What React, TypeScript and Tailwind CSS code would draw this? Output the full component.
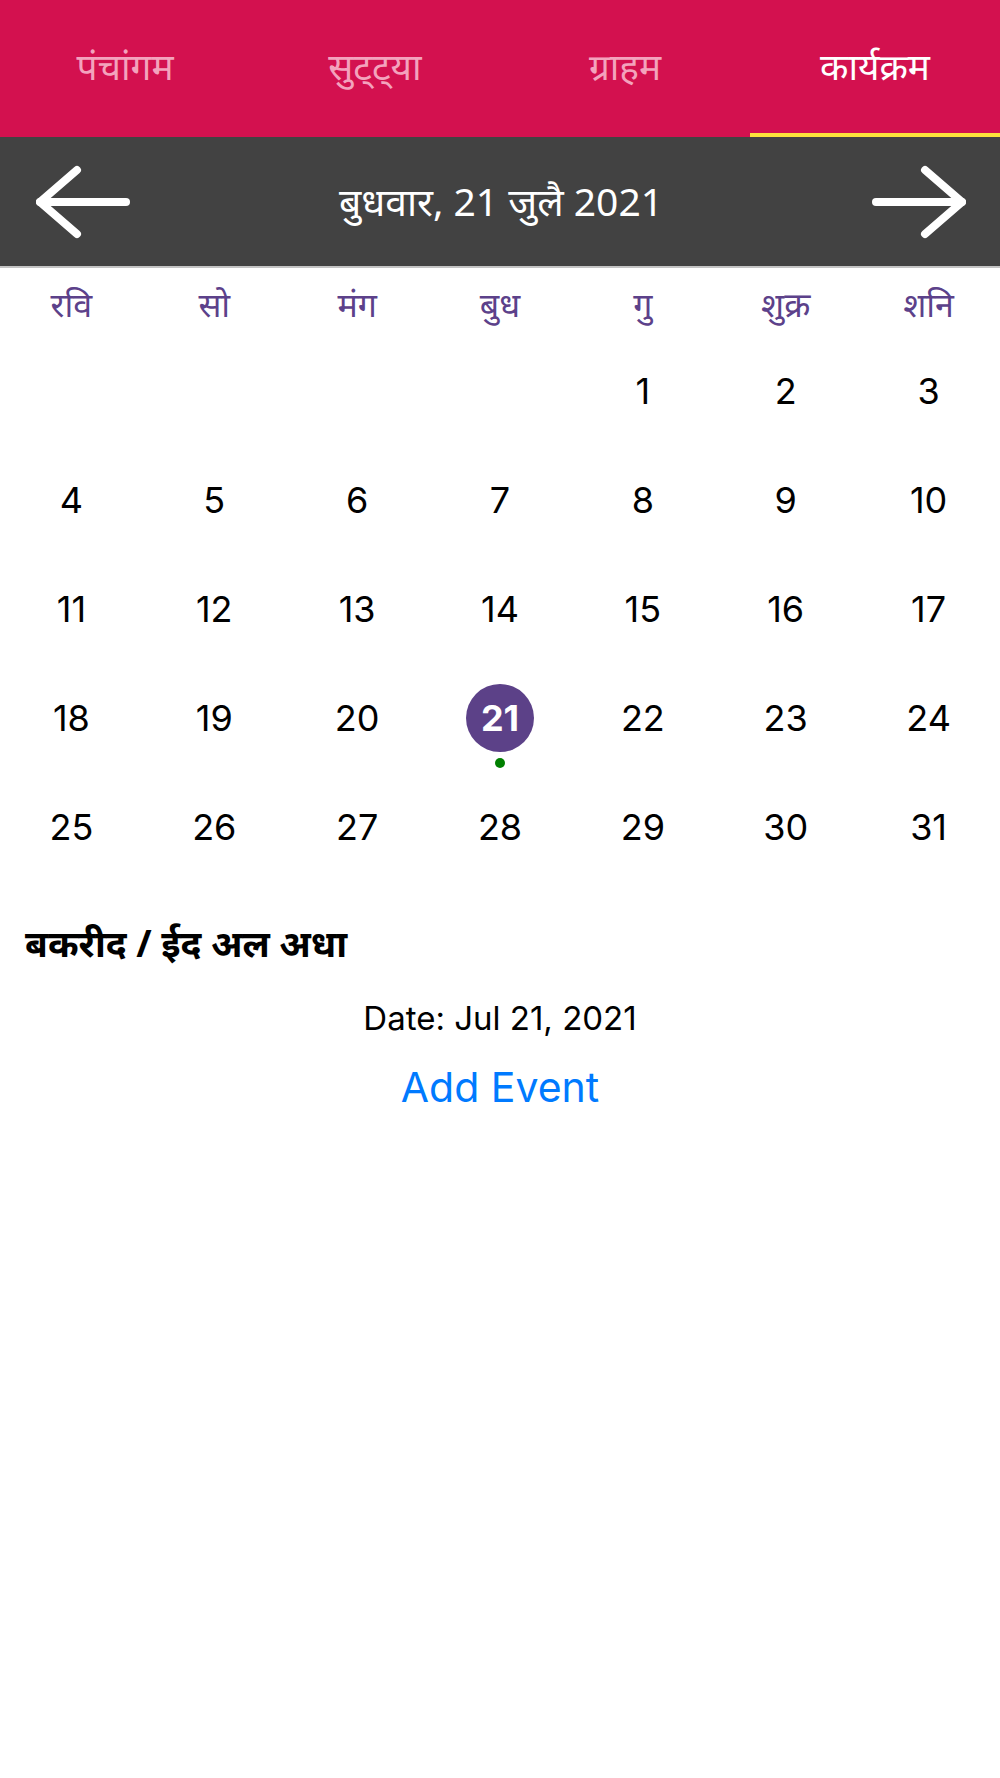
import React from "react";

const days = ["रवि", "सो", "मंग", "बुध", "गु", "शुक्र", "शनि"];
const cells: (number | null)[] = [
  null, null, null, null, 1, 2, 3,
  4, 5, 6, 7, 8, 9, 10,
  11, 12, 13, 14, 15, 16, 17,
  18, 19, 20, 21, 22, 23, 24,
  25, 26, 27, 28, 29, 30, 31,
];

const tabs = ["पंचांगम", "सुट्ट्या", "ग्राहम", "कार्यक्रम"];

function Arrow({ dir }: { dir: "left" | "right" }) {
  return (
    <svg width="94" height="74" viewBox="0 0 94 74" fill="none">
      {dir === "left" ? (
        <g stroke="white" strokeWidth="8" strokeLinecap="round" strokeLinejoin="round">
          <path d="M4 37 H90" />
          <path d="M41 5 L4 37 L41 69" />
        </g>
      ) : (
        <g stroke="white" strokeWidth="8" strokeLinecap="round" strokeLinejoin="round">
          <path d="M4 37 H90" />
          <path d="M53 5 L90 37 L53 69" />
        </g>
      )}
    </svg>
  );
}

export default function App() {
  const deva = { fontFamily: '"Noto Sans", "Noto Sans Devanagari", "Lohit Devanagari", sans-serif' };
  return (
    <div className="w-[1000px] h-[1778px] bg-white" style={{ fontFamily: "Inter, 'Liberation Sans', sans-serif" }}>
      {/* Tabs */}
      <div className="flex h-[137px] bg-[#d3114f]">
        {tabs.map((t, i) => (
          <div key={t} className="relative flex-1 flex items-center justify-center">
            <span
              className={`text-[37px] font-normal pb-[6px] ${i === 3 ? "text-white" : "text-[#f3a3bd]"}`}
              style={deva}
            >
              {t}
            </span>
            {i === 3 && <div className="absolute bottom-0 left-0 right-0 h-[4px] bg-[#fbe33c]" />}
          </div>
        ))}
      </div>

      {/* Date bar */}
      <div className="flex h-[131px] items-center justify-between bg-[#424242] border-b-2 border-[#c4c4c4] pl-[36px] pr-[34px]">
        <Arrow dir="left" />
        <span className="text-white text-[39px]" style={deva}>
          बुधवार, 21 जुलै 2021
        </span>
        <Arrow dir="right" />
      </div>

      {/* Weekdays */}
      <div className="grid grid-cols-7 h-[68px] items-center">
        {days.map((d) => (
          <div key={d} className="text-center text-[34px] text-[#5c418a] pt-[4px]" style={deva}>
            {d}
          </div>
        ))}
      </div>

      {/* Days grid */}
      <div className="grid grid-cols-7">
        {cells.map((c, i) => (
          <div key={i} className="h-[109px] flex items-center justify-center relative">
            {c === 21 ? (
              <>
                <div className="w-[68px] h-[68px] rounded-full bg-[#5c4188] flex items-center justify-center text-white text-[36px] font-bold">
                  21
                </div>
                <div className="absolute left-1/2 -translate-x-1/2 top-[95px] w-[10px] h-[10px] rounded-full bg-[#008000]" />
              </>
            ) : (
              <span className="text-[36px] text-black">{c ?? ""}</span>
            )}
          </div>
        ))}
      </div>

      {/* Event */}
      <div className="pt-[38px] px-[25px]">
        <div className="text-[37px] font-bold text-black leading-[48px]" style={deva}>
          बकरीद / ईद अल अधा
        </div>
      </div>
      <div className="mt-[30px] text-center text-[33px] text-black leading-[42px]">Date: Jul 21, 2021</div>
      <div className="mt-[22px] text-center text-[41px] text-[#007aff] leading-[52px]">Add Event</div>
    </div>
  );
}
